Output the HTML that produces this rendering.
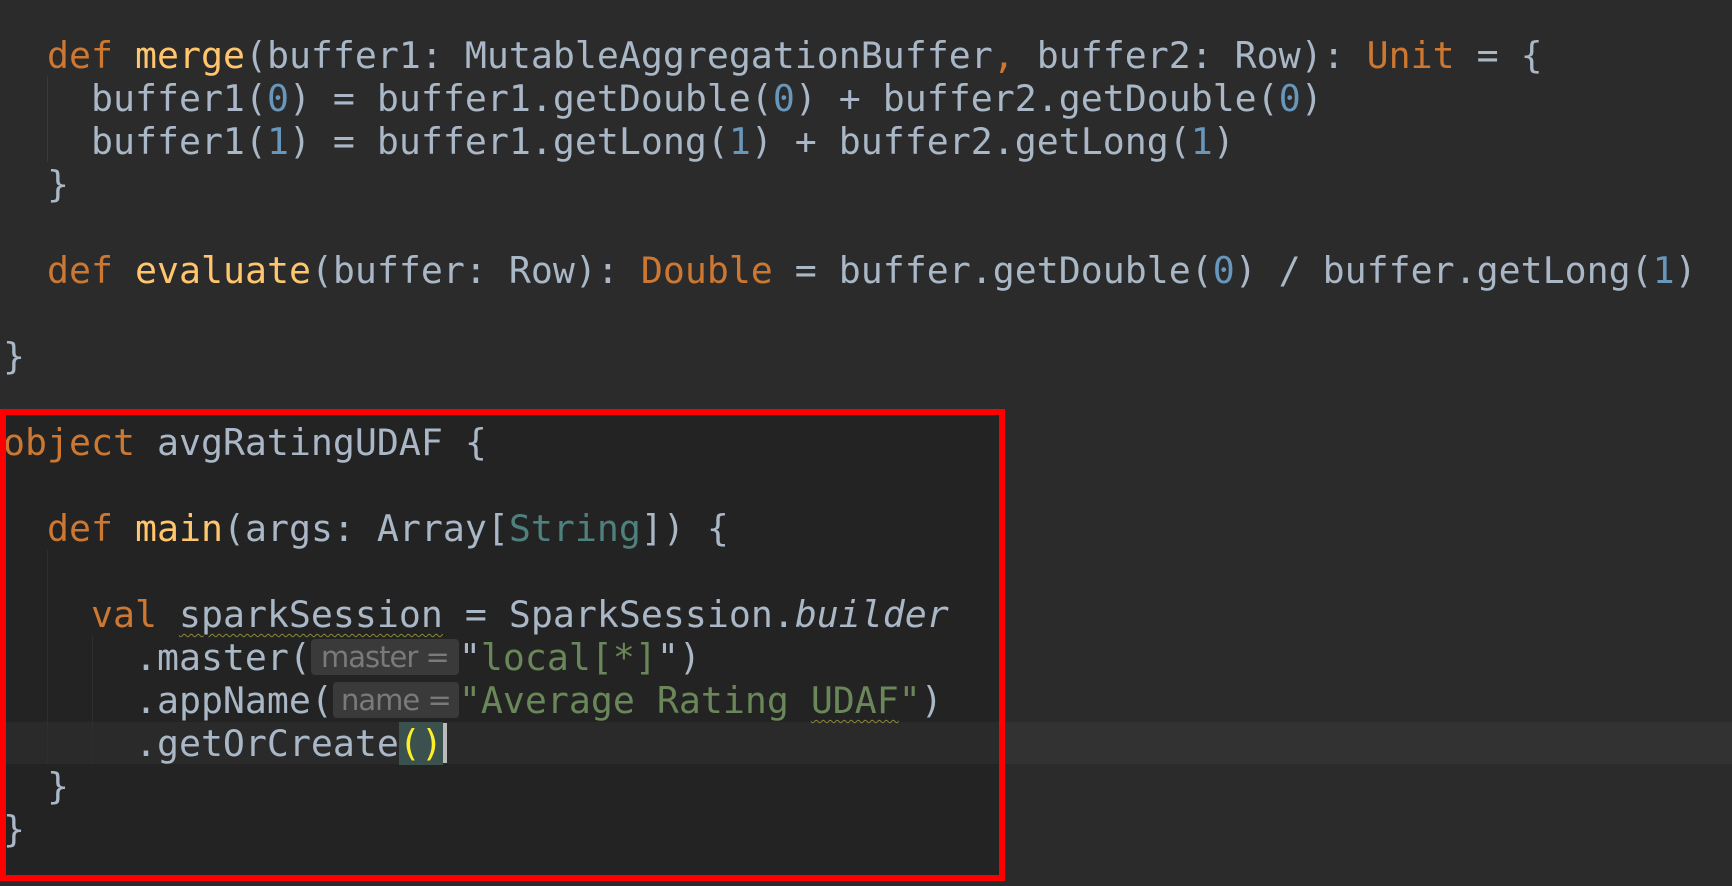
<!DOCTYPE html>
<html><head><meta charset="utf-8"><style>
html,body{margin:0;padding:0;}
body{width:1732px;height:886px;background:#2b2b2b;position:relative;overflow:hidden;font-family:"DejaVu Sans Mono","Liberation Mono",monospace;font-size:36.54px;color:#a9b7c6;}
.box{position:absolute;left:0;top:409px;width:1005px;height:472px;background:#232323;}
.hl{position:absolute;left:0;top:722px;width:1732px;height:42px;background:#323232;}
.hl2{position:absolute;left:6px;top:722px;width:993px;height:42px;background:#2a2a2a;}
.red{position:absolute;left:0;top:409px;width:993px;height:460px;border:6px solid #ff0000;}
.l{position:absolute;left:3px;white-space:pre;height:43px;line-height:43px;}
.k{color:#cc7832}.f{color:#ffc66d}.n{color:#6897bb}.s{color:#6a8759}.t{color:#4e807d}
.i{font-style:italic}
.hint{display:inline-block;vertical-align:middle;height:36px;line-height:36px;background:#3a3a3a;color:#7a7a7a;font-family:"DejaVu Sans","Liberation Sans",sans-serif;font-size:29px;border-radius:4px;text-align:center;letter-spacing:-1px;margin-top:-6px}
.w{text-decoration:underline wavy #8a8a3a;text-underline-offset:6px;text-decoration-thickness:1px}
.br{background:#3b514d;color:#ffef28}
.caret{display:inline-block;width:4px;height:40px;background:#bbbbbb;vertical-align:middle;margin-top:-6px}
.g{position:absolute;width:1px;background:#3a3a3a}
</style></head><body>
<div class="box"></div>
<div class="hl"></div>
<div class="hl2"></div>
<div class="g" style="left:47px;top:76px;height:86px"></div>
<div class="g" style="left:47px;top:550px;height:214px;background:#2e2e2e"></div>
<div class="g" style="left:92px;top:636px;height:128px;background:#2e2e2e"></div>
<div class="l" style="top:34px">  <span class="k">def</span> <span class="f">merge</span>(buffer1: MutableAggregationBuffer<span class="k">,</span> buffer2: Row): <span class="k">Unit</span> = {</div>
<div class="l" style="top:77px">    buffer1(<span class="n">0</span>) = buffer1.getDouble(<span class="n">0</span>) + buffer2.getDouble(<span class="n">0</span>)</div>
<div class="l" style="top:120px">    buffer1(<span class="n">1</span>) = buffer1.getLong(<span class="n">1</span>) + buffer2.getLong(<span class="n">1</span>)</div>
<div class="l" style="top:163px">  }</div>
<div class="l" style="top:249px">  <span class="k">def</span> <span class="f">evaluate</span>(buffer: Row): <span class="k">Double</span> = buffer.getDouble(<span class="n">0</span>) / buffer.getLong(<span class="n">1</span>)</div>
<div class="l" style="top:335px">}</div>
<div class="l" style="top:421px"><span class="k">object</span> avgRatingUDAF {</div>
<div class="l" style="top:507px">  <span class="k">def</span> <span class="f">main</span>(args: Array[<span class="t">String</span>]) {</div>
<div class="l" style="top:593px">    <span class="k">val</span> <span class="w">sparkSession</span> = SparkSession.<span class="i">builder</span></div>
<div class="l" style="top:636px">      .master(<span class="hint" style="width:148px">master =</span>"<span class="s">local[*]</span>")</div>
<div class="l" style="top:679px">      .appName(<span class="hint" style="width:126px">name =</span><span class="s">"Average Rating <span class="w">UDAF</span>"</span>)</div>
<div class="l" style="top:722px">      .getOrCreate<span class="br">()</span><span class="caret"></span></div>
<div class="l" style="top:765px">  }</div>
<div class="l" style="top:808px">}</div>
<div class="red"></div>
</body></html>
